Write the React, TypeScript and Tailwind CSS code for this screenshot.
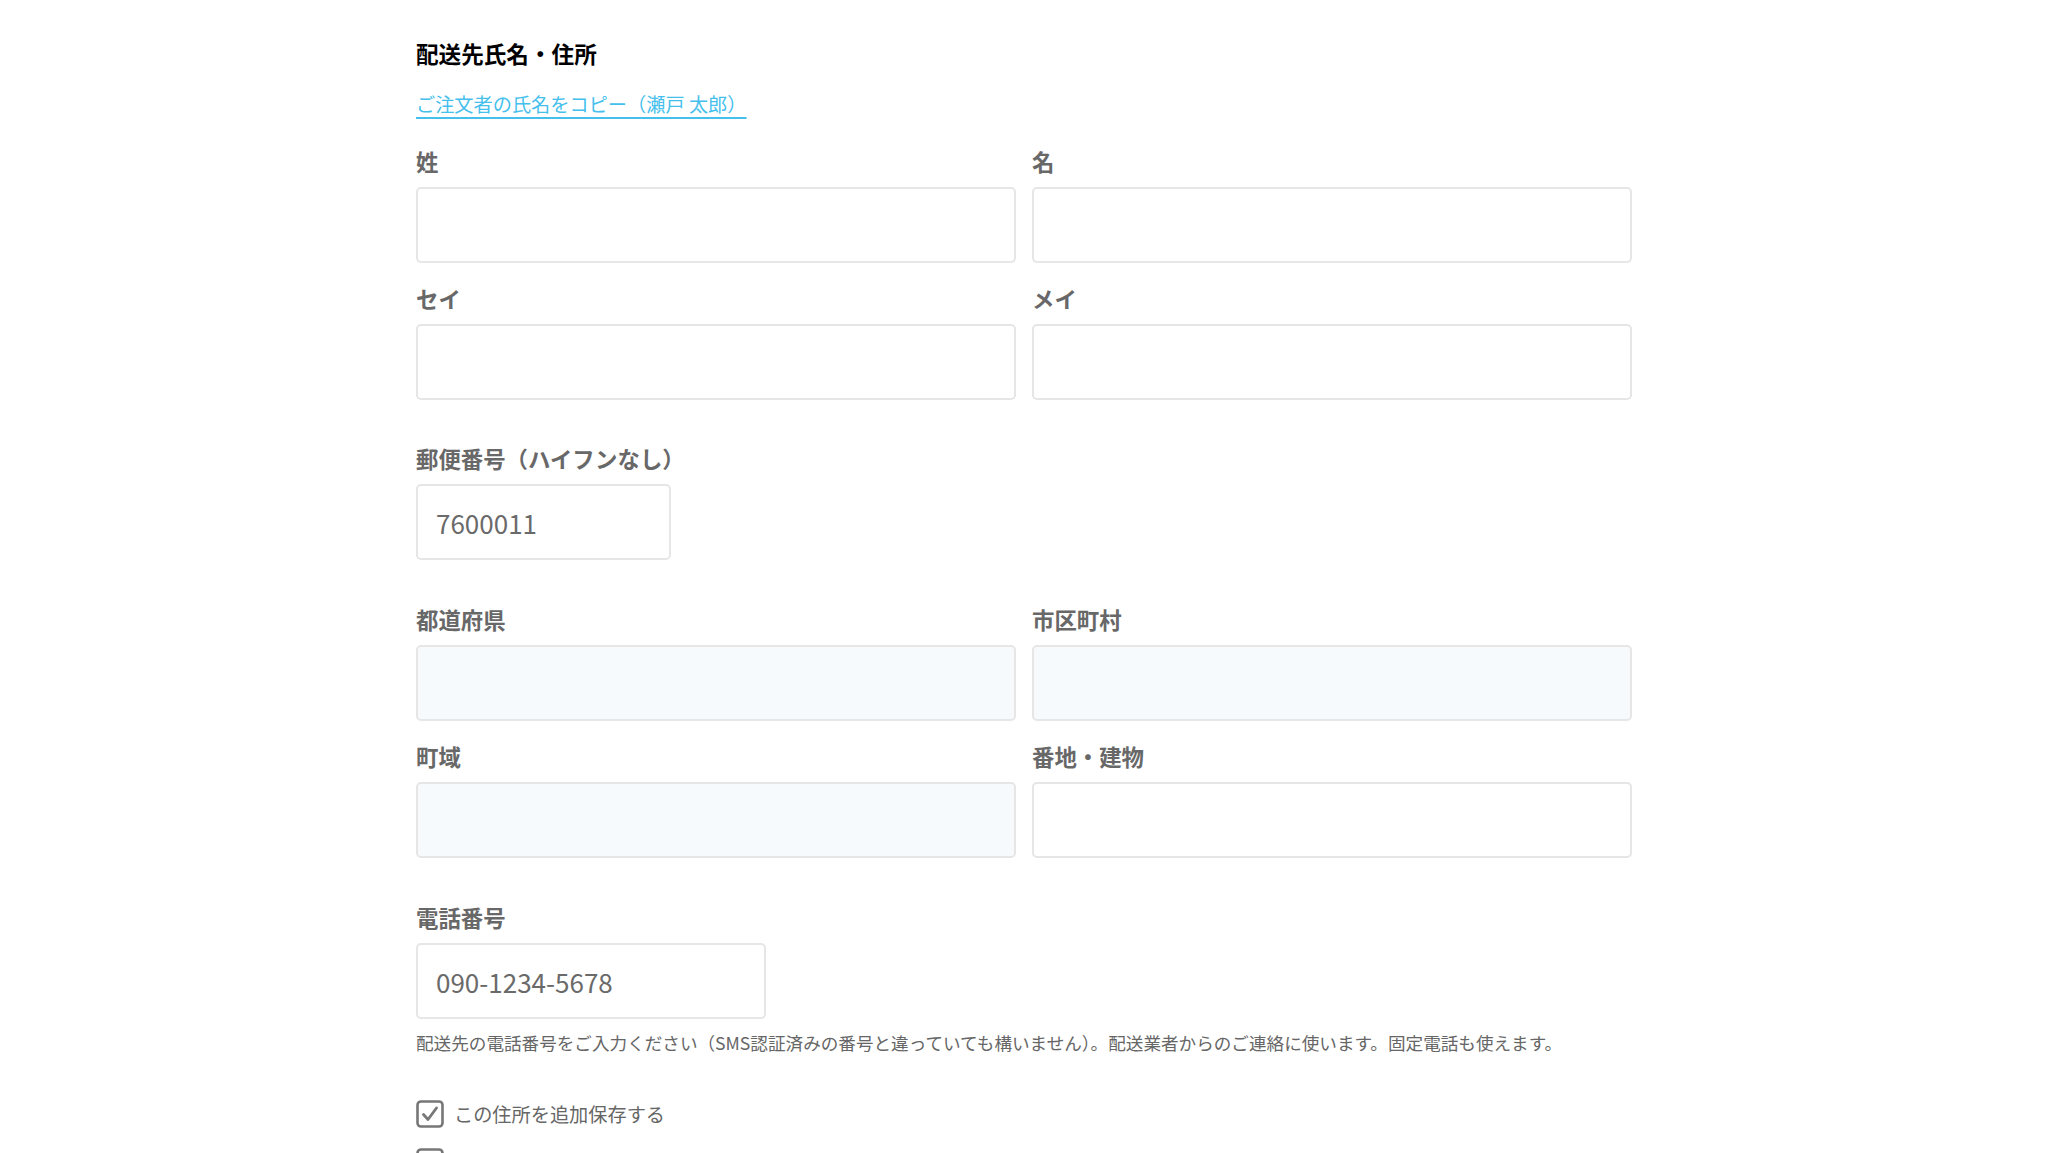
import React from "react";

const font = { fontFamily: '"Noto Sans CJK JP", "Noto Sans", sans-serif' };

function Label({ children }: { children: React.ReactNode }) {
  return <div className="text-[22.4px] leading-[33px] font-bold text-[#686868]">{children}</div>;
}

function Field({
  label,
  value,
  filled,
  width,
}: {
  label: string;
  value?: string;
  filled?: boolean;
  width?: string;
}) {
  return (
    <div className="flex flex-col gap-[9px]">
      <Label>{label}</Label>
      <input
        readOnly
        defaultValue={value}
        className={`${width ?? "w-full"} h-[76px] rounded-[5px] border-2 border-[#e6e6e6] px-[18px] text-[26px] text-[#6a6a6a] outline-none ${
          filled ? "bg-[#f7fafd]" : "bg-white"
        }`}
        style={font}
      />
    </div>
  );
}

function CheckBox({ checked }: { checked?: boolean }) {
  return (
    <svg width="28" height="28" viewBox="0 0 28 28" className="shrink-0">
      <rect x="1.5" y="1.5" width="25" height="25" rx="3.5" fill="white" stroke="#777" strokeWidth="2.6" />
      {checked && (
        <path d="M7.5 14.5 L12 19.5 L20.5 8" fill="none" stroke="#777" strokeWidth="2.8" strokeLinecap="round" strokeLinejoin="round" />
      )}
    </svg>
  );
}

export default function App() {
  return (
    <div className="min-h-screen bg-white" style={font}>
      <div className="mx-auto w-[1216px] pt-[37px]">
        <h2 className="text-[22.6px] leading-[33px] font-bold text-black">配送先氏名・住所</h2>
        <a href="#" className="mt-[20px] inline-block text-[19.2px] leading-[28px] text-[#45bfec] underline underline-offset-[5px] decoration-[1.5px]">
          ご注文者の氏名をコピー（瀬戸 太郎）
        </a>

        <div className="mt-[27px] grid grid-cols-2 gap-x-[16px] gap-y-[19px]">
          <Field label="姓" />
          <Field label="名" />
          <Field label="セイ" />
          <Field label="メイ" />
        </div>

        <div className="mt-[42px]">
          <Field label="郵便番号（ハイフンなし）" value="7600011" width="w-[255px]" />
        </div>

        <div className="mt-[43px] grid grid-cols-2 gap-x-[16px] gap-y-[19px]">
          <Field label="都道府県" filled />
          <Field label="市区町村" filled />
          <Field label="町域" filled />
          <Field label="番地・建物" />
        </div>

        <div className="mt-[43px]">
          <Field label="電話番号" value="090-1234-5678" width="w-[350px]" />
          <p className="mt-[11px] text-[17.6px] leading-[25px] text-[#666]">
            配送先の電話番号をご入力ください（SMS認証済みの番号と違っていても構いません）。配送業者からのご連絡に使います。固定電話も使えます。
          </p>
        </div>

        <div className="mt-[45px] flex flex-col gap-[20px]">
          <label className="flex items-center gap-[10px] text-[19.2px] leading-[28px] text-[#666]">
            <CheckBox checked />
            この住所を追加保存する
          </label>
          <label className="flex items-center gap-[10px] text-[19.2px] leading-[28px] text-[#666]">
            <CheckBox />
            この住所をデフォルトに設定する
          </label>
        </div>
      </div>
    </div>
  );
}
